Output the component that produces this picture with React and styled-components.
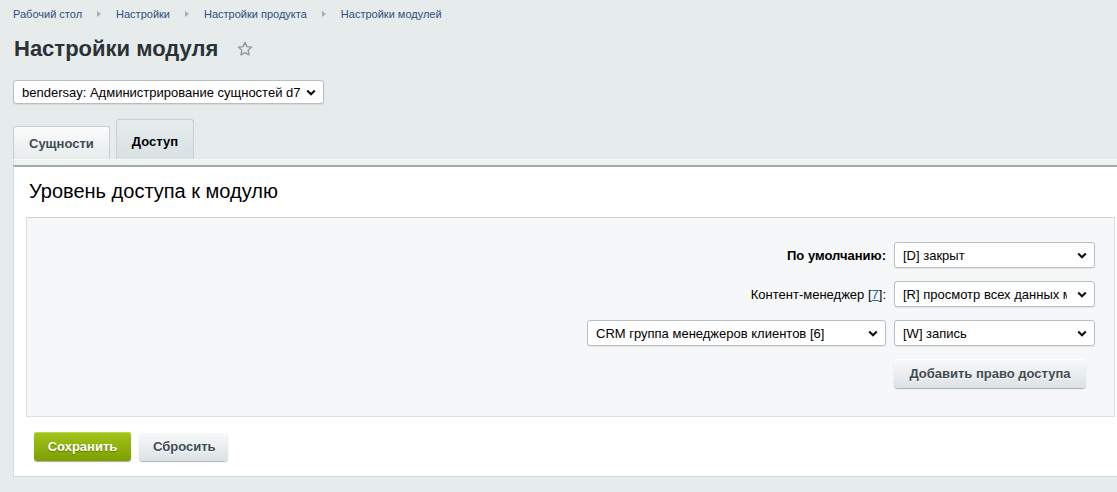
import React from "react";
import styled, { createGlobalStyle } from "styled-components";

const GlobalStyle = createGlobalStyle`
  html, body {
    margin: 0;
    padding: 0;
    overflow-x: hidden;
  }
  body {
    background-color: #e6ebec;
    font-family: "Liberation Sans", Arial, sans-serif;
    color: #000;
  }
`;

const Page = styled.div`
  padding: 7px 0 20px 13px;
`;

const Breadcrumbs = styled.nav`
  display: flex;
  align-items: center;
  gap: 15px;
  font-size: 11px;
  line-height: 14px;
`;

const Crumb = styled.a`
  color: #2f4f7a;
  text-decoration: none;
`;

const Sep = styled.span`
  width: 0;
  height: 0;
  border-top: 3px solid transparent;
  border-bottom: 3px solid transparent;
  border-left: 4px solid #a5aeb3;
`;

const TitleRow = styled.div`
  display: flex;
  align-items: center;
  gap: 18px;
  margin-top: 15px;
  padding-left: 1px;
`;

const Title = styled.h1`
  margin: 0;
  font-size: 22px;
  line-height: 26px;
  font-weight: bold;
  color: #2b3236;
`;

const SelectWrap = styled.span`
  position: relative;
  display: inline-flex;
  width: ${(p) => p.$width}px;
  justify-self: ${(p) => p.$align || "start"};
`;

const Select = styled.select`
  appearance: none;
  width: 100%;
  height: ${(p) => p.$height || 26}px;
  border: 1px solid #b9bec1;
  border-radius: 3px;
  background: #fff;
  font-family: "Liberation Sans", Arial, sans-serif;
  font-size: 13px;
  color: #000;
  padding: 0 ${(p) => p.$padRight || 20}px 0 8px;
  box-sizing: border-box;
  box-shadow: 0 1px 1px rgba(0, 0, 0, 0.08);
  outline: none;
`;

const Chevron = styled.svg`
  position: absolute;
  right: 8px;
  top: 50%;
  margin-top: -3px;
  pointer-events: none;
`;

const ModuleSelect = styled.div`
  margin-top: 18px;
`;

const Tabs = styled.div`
  display: flex;
  align-items: flex-end;
  gap: 6px;
  margin-top: 15px;
  height: 40px;
`;

const Tab = styled.div`
  box-sizing: border-box;
  height: ${(p) => (p.$active ? 40 : 33)}px;
  padding: 0 15px;
  display: flex;
  align-items: center;
  padding-top: ${(p) => (p.$active ? 3 : 0)}px;
  font-size: 13px;
  font-weight: bold;
  color: ${(p) => (p.$active ? "#000" : "#3f4b54")};
  border: 1px solid #c7cfd2;
  border-bottom: none;
  border-radius: 3px 3px 0 0;
  background: ${(p) =>
    p.$active
      ? "linear-gradient(to bottom, #e7ecee, #d9e1e3)"
      : "linear-gradient(to bottom, #fbfcfc, #e6ebec)"};
  cursor: pointer;
`;

const Strip = styled.div`
  height: 6px;
  margin-right: -10px;
  background: #edf1f2;
  border-top: 1px solid #f7f9f9;
  border-left: 1px solid #d5dcdf;
  box-sizing: border-box;
`;

const Card = styled.section`
  margin-right: -10px;
  background: #fff;
  border-top: 2px solid #a3aaad;
  border-left: 1px solid #d5dcdf;
  border-bottom: 1px solid #cfd7da;
  padding: 12px 0 15px 12px;
`;

const CardTitle = styled.h2`
  margin: 0 0 14px 3px;
  font-size: 20px;
  line-height: 24px;
  font-weight: normal;
  color: #000;
`;

const InnerBox = styled.div`
  background: #f5f7f8;
  border: 1px solid #dbe2e5;
  border-top-color: #ccd4d7;
  margin-right: 12px;
  padding: 24px 19px 28px 0;
  display: grid;
  grid-template-columns: 1fr 201px;
  column-gap: 8px;
  row-gap: 13px;
  align-items: center;
`;

const Label = styled.label`
  justify-self: end;
  font-size: 13px;
  font-weight: ${(p) => (p.$bold ? "bold" : "normal")};
  color: #000;
`;

const GroupLink = styled.a`
  color: #2067b0;
  text-decoration: underline;
`;

const GrayButton = styled.button`
  height: 29px;
  padding: 0 14px;
  border: none;
  border-radius: 4px;
  background: linear-gradient(to bottom, #f8fafa, #dbe2e5);
  box-shadow: 0 1px 1px rgba(0, 0, 0, 0.3), inset 0 1px 0 #fff;
  font-family: "Liberation Sans", Arial, sans-serif;
  font-size: 13px;
  font-weight: bold;
  color: #3f4b54;
  text-shadow: 0 1px #fff;
  cursor: pointer;
  justify-self: ${(p) => p.$justify || "auto"};
  width: ${(p) => (p.$width ? `${p.$width}px` : "auto")};
`;

const GreenButton = styled.button`
  height: 29px;
  width: 97px;
  border: none;
  border-radius: 3px;
  background: linear-gradient(to bottom, #a3c41a, #7d9f00);
  box-shadow: 0 1px 1px rgba(0, 0, 0, 0.35), inset 0 1px 0 #bcd84a;
  font-family: "Liberation Sans", Arial, sans-serif;
  font-size: 13px;
  font-weight: bold;
  color: #fff;
  text-shadow: 0 1px 1px rgba(60, 80, 0, 0.6);
  cursor: pointer;
`;

const Actions = styled.div`
  display: flex;
  gap: 8px;
  margin-top: 15px;
  padding-left: 8px;
`;

const Star = () => (
  <svg width="18" height="18" viewBox="0 0 24 24" fill="none" stroke="#8e979c" strokeWidth="1.8" strokeLinejoin="round">
    <path d="M12 3.2l2.6 5.6 6.1.7-4.5 4.2 1.2 6.1L12 16.8l-5.4 3 1.2-6.1-4.5-4.2 6.1-.7z" />
  </svg>
);

const DropSelect = ({ width, align, height, padRight, value }) => (
  <SelectWrap $width={width} $align={align}>
    <Select $height={height} $padRight={padRight} defaultValue={value}>
      <option>{value}</option>
    </Select>
    <Chevron width="10" height="7" viewBox="0 0 10 7">
      <path d="M1.2 1.4L5 5.2l3.8-3.8" fill="none" stroke="#111" strokeWidth="2.1" />
    </Chevron>
  </SelectWrap>
);

const crumbs = ["Рабочий стол", "Настройки", "Настройки продукта", "Настройки модулей"];

export default function App() {
  return (
    <>
      <GlobalStyle />
      <Page>
        <Breadcrumbs>
          {crumbs.map((c, i) => (
            <React.Fragment key={c}>
              {i > 0 && <Sep />}
              <Crumb href="#">{c}</Crumb>
            </React.Fragment>
          ))}
        </Breadcrumbs>

        <TitleRow>
          <Title>Настройки модуля</Title>
          <Star />
        </TitleRow>

        <ModuleSelect>
          <DropSelect width={311} height={24} value="bendersay: Администрирование сущностей d7" />
        </ModuleSelect>

        <Tabs>
          <Tab>Сущности</Tab>
          <Tab $active>Доступ</Tab>
        </Tabs>
        <Strip />

        <Card>
          <CardTitle>Уровень доступа к модулю</CardTitle>
          <InnerBox>
            <Label $bold>По умолчанию:</Label>
            <DropSelect width={201} value="[D] закрыт" />

            <Label>
              Контент-менеджер [<GroupLink href="#">7</GroupLink>]:
            </Label>
            <DropSelect width={201} padRight={27} value="[R] просмотр всех данных модуля" />

            <DropSelect width={299} align="end" value="CRM группа менеджеров клиентов [6]" />
            <DropSelect width={201} value="[W] запись" />

            <span />
            <GrayButton $justify="start" $width={192}>Добавить право доступа</GrayButton>
          </InnerBox>

          <Actions>
            <GreenButton>Сохранить</GreenButton>
            <GrayButton $width={89}>Сбросить</GrayButton>
          </Actions>
        </Card>
      </Page>
    </>
  );
}
